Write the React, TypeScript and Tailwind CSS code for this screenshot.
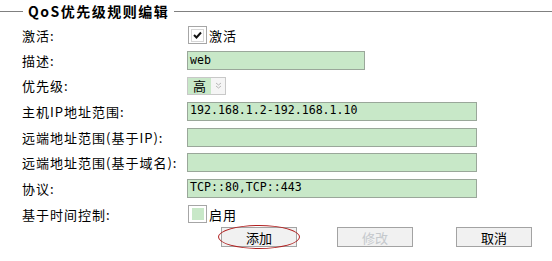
const labelFont = { fontFamily: '"Noto Sans CJK SC", "Liberation Sans", sans-serif' };

interface RowProps {
  label: string;
  h: string;
  children?: React.ReactNode;
}

const Row = ({ label, h, children }: RowProps) => (
  <div className={`flex items-center ${h}`}>
    <span className="w-[165px] shrink-0 text-[13px] tracking-[1px] text-black leading-none">{label}</span>
    {children}
  </div>
);

const TextBox = ({ value, w }: { value?: string; w: string }) => (
  <div
    className={`${w} h-[19px] bg-[#c8e8c8] border border-[#9aa79a] flex items-center px-[2px] text-[11.6px] text-black leading-none`}
    style={{ fontFamily: '"DejaVu Sans Mono", "Liberation Mono", monospace' }}
  >
    {value}
  </div>
);

const Btn = ({ text, disabled, className }: { text: string; disabled?: boolean; className?: string }) => (
  <div
    className={`w-[76px] h-[20px] border border-[#a3a3a3] bg-[#f1f1f1] flex items-center justify-center text-[13px] leading-none ${
      disabled ? 'text-[#c4c8cc] bg-[#eef0f2]' : 'text-black'
    } ${className ?? ''}`}
  >
    {text}
  </div>
);

export default function App() {
  return (
    <div className="w-[552px] h-[261px] bg-white overflow-hidden" style={labelFont}>
      {/* legend */}
      <div className="flex items-center h-[22px]">
        <div className="w-[23px] h-px bg-[#808080]" />
        <span className="px-[5px] text-[14px] font-bold tracking-[1.5px] text-black leading-none">QoS优先级规则编辑</span>
        <div className="flex-1 h-px bg-[#808080]" />
      </div>

      <div className="pl-[22px]">
        <Row label="激活:" h="h-[26px]">
          <div className="w-[19px] h-[18px] border border-[#a6a6a6] bg-white flex items-center justify-center ml-[1px]">
            <div className="w-[13px] h-[13px] border border-[#d6d6d6] flex items-center justify-center">
              <svg width="9" height="8" viewBox="0 0 9 8">
                <path d="M1 4 L3.5 6.5 L8 1.5" stroke="#111" strokeWidth="2" fill="none" />
              </svg>
            </div>
          </div>
          <span className="ml-[2px] text-[13px] tracking-[1px] leading-none">激活</span>
        </Row>

        <Row label="描述:" h="h-[25px]">
          <TextBox value="web" w="w-[178px]" />
        </Row>

        <Row label="优先级:" h="h-[25px]">
          <div className="w-[39px] h-[18px] border border-[#c8c8c8] flex items-center bg-[#f5f5f5]">
            <div className="h-full w-[23px] bg-[#c8e8c8] flex items-center justify-center text-[13px] leading-none">高</div>
            <div className="flex-1 flex items-center justify-center">
              <svg width="7" height="7" viewBox="0 0 7 7">
                <path d="M1 1 L3.5 3 L6 1 M1 4 L3.5 6 L6 4" stroke="#b8b8b8" strokeWidth="1" fill="none" />
              </svg>
            </div>
          </div>
        </Row>

        <Row label="主机IP地址范围:" h="h-[26px]">
          <TextBox value="192.168.1.2-192.168.1.10" w="w-[290px]" />
        </Row>

        <Row label="远端地址范围(基于IP):" h="h-[26px]">
          <TextBox w="w-[290px]" />
        </Row>

        <Row label="远端地址范围(基于域名):" h="h-[25px]">
          <TextBox w="w-[290px]" />
        </Row>

        <Row label="协议:" h="h-[26px]">
          <TextBox value="TCP::80,TCP::443" w="w-[290px]" />
        </Row>

        <Row label="基于时间控制:" h="h-[26px]">
          <div className="w-[19px] h-[18px] border border-[#a6a6a6] bg-white flex items-center justify-center ml-[1px]">
            <div className="w-[12px] h-[12px] bg-[#c8e8c8]" />
          </div>
          <span className="ml-[2px] text-[13px] tracking-[1px] leading-none">启用</span>
        </Row>

        <div className="flex items-center h-[20px]">
          <div className="w-[199px] shrink-0" />
          <div className="relative">
            <Btn text="添加" />
            <span className="absolute left-[-3px] top-[-2px] w-[82px] h-[24px] rounded-[50%] border border-[#b02020]" />
          </div>
          <Btn text="修改" disabled className="ml-[40px]" />
          <Btn text="取消" className="ml-[43px]" />
        </div>
      </div>
    </div>
  );
}
